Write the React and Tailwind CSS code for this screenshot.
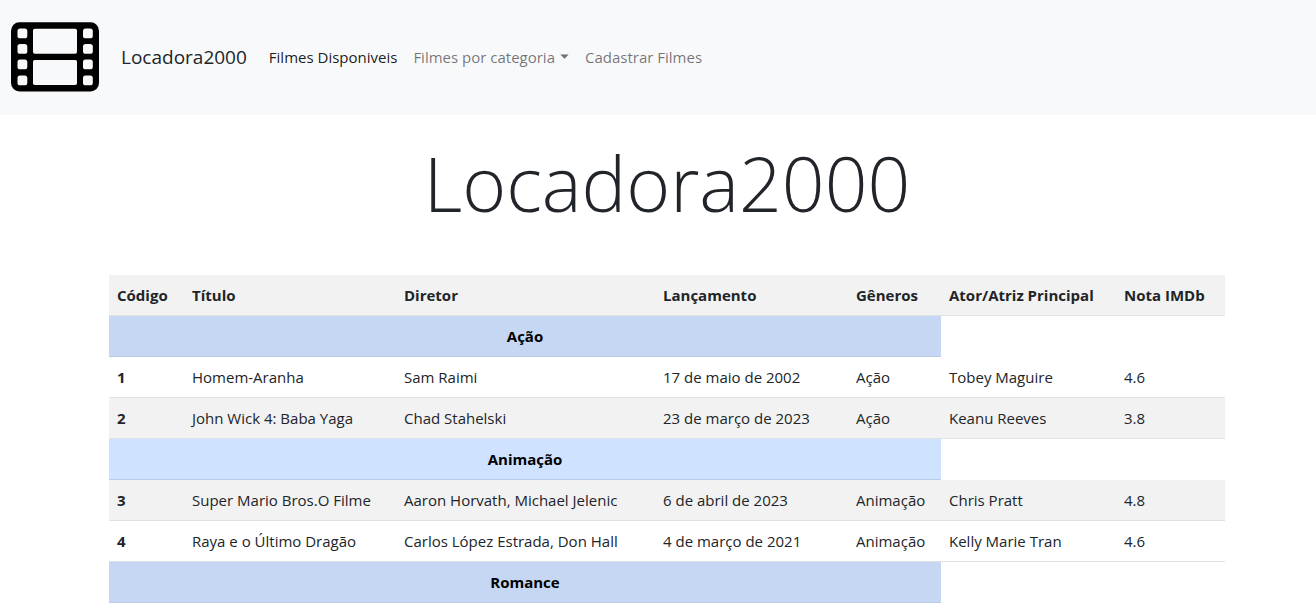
const columns = [
  { label: "Código", width: "w-[75px]" },
  { label: "Título", width: "w-[212px]" },
  { label: "Diretor", width: "w-[259px]" },
  { label: "Lançamento", width: "w-[193px]" },
  { label: "Gêneros", width: "w-[93px]" },
  { label: "Ator/Atriz Principal", width: "w-[175px]" },
  { label: "Nota IMDb", width: "w-[109px]" },
];

const rows = [
  { group: "Ação", tone: "bg-[#c5d7f2]" },
  { cells: ["1", "Homem-Aranha", "Sam Raimi", "17 de maio de 2002", "Ação", "Tobey Maguire", "4.6"] },
  { cells: ["2", "John Wick 4: Baba Yaga", "Chad Stahelski", "23 de março de 2023", "Ação", "Keanu Reeves", "3.8"], striped: true },
  { group: "Animação", tone: "bg-[#cfe2ff]" },
  { cells: ["3", "Super Mario Bros.O Filme", "Aaron Horvath, Michael Jelenic", "6 de abril de 2023", "Animação", "Chris Pratt", "4.8"], striped: true },
  { cells: ["4", "Raya e o Último Dragão", "Carlos López Estrada, Don Hall", "4 de março de 2021", "Animação", "Kelly Marie Tran", "4.6"] },
  { group: "Romance", tone: "bg-[#c5d7f2]" },
];

function FilmLogo({ background }) {
  const holes = [6.5, 22, 37.5, 53.5];
  return (
    <svg width="88" height="70" viewBox="0 0 88 70" aria-hidden="true">
      <rect y="0.3" width="88" height="69.2" rx="8.5" fill="#000" />
      <g fill={background}>
        {holes.map((y) => (
          <g key={y}>
            <rect x="6.5" y={y} width="9.8" height="9.8" rx="2.6" />
            <rect x="72" y={y} width="9.8" height="9.8" rx="2.6" />
          </g>
        ))}
        <rect x="22" y="6.7" width="44" height="25" rx="1.8" />
        <rect x="22" y="38" width="44" height="25" rx="1.8" />
      </g>
    </svg>
  );
}

function Navbar() {
  return (
    <nav className="flex h-[115px] items-center bg-[#f8f9fa] pb-[2px] pl-[11px]">
      <a href="#inicio" className="flex items-center gap-[22px] text-[19px] leading-[30px]">
        <FilmLogo background="#f8f9fa" />
        Locadora2000
      </a>
      <ul className="ml-[22px] flex items-center gap-4">
        <li>
          <a href="#filmes" className="text-black/90">Filmes Disponiveis</a>
        </li>
        <li>
          <button type="button" className="flex items-center gap-[5px] text-black/55">
            Filmes por categoria
            <svg width="9" height="5" viewBox="0 0 9 5" aria-hidden="true">
              <path d="M0.3 0.5h8.4L4.5 4.8z" fill="currentColor" />
            </svg>
          </button>
        </li>
        <li>
          <a href="#cadastrar" className="text-black/55">Cadastrar Filmes</a>
        </li>
      </ul>
    </nav>
  );
}

function MovieTable() {
  return (
    <table className="w-full table-fixed border-separate border-spacing-0 text-left">
      <thead>
        <tr className="bg-[#f2f2f2]">
          {columns.map((column) => (
            <th key={column.label} scope="col" className={`${column.width} whitespace-nowrap border-b border-[#dee2e6] p-2 font-bold`}>
              {column.label}
            </th>
          ))}
        </tr>
      </thead>
      <tbody>
        {rows.map((row) =>
          row.group ? (
            <tr key={row.group}>
              <th colSpan={5} scope="colgroup" className={`${row.tone} border-b border-[#bacbe6] p-2 text-center font-bold text-black`}>
                {row.group}
              </th>
            </tr>
          ) : (
            <tr key={row.cells[0]} className={row.striped ? "bg-[#f2f2f2]" : "bg-white"}>
              <th scope="row" className="border-b border-[#dee2e6] p-2 font-bold">{row.cells[0]}</th>
              {row.cells.slice(1).map((cell, index) => (
                <td key={index} className="whitespace-nowrap border-b border-[#dee2e6] p-2">{cell}</td>
              ))}
            </tr>
          )
        )}
      </tbody>
    </table>
  );
}

export default function App() {
  return (
    <div className="bg-white font-['Open_Sans','Noto_Sans',sans-serif] text-[15px] leading-6 text-[#212529]">
      <Navbar />
      <main className="pr-[91px] pl-[109px]">
        <h1 className="pt-5 pb-11 text-center text-[75px] leading-[96px] font-light">Locadora2000</h1>
        <MovieTable />
      </main>
    </div>
  );
}
